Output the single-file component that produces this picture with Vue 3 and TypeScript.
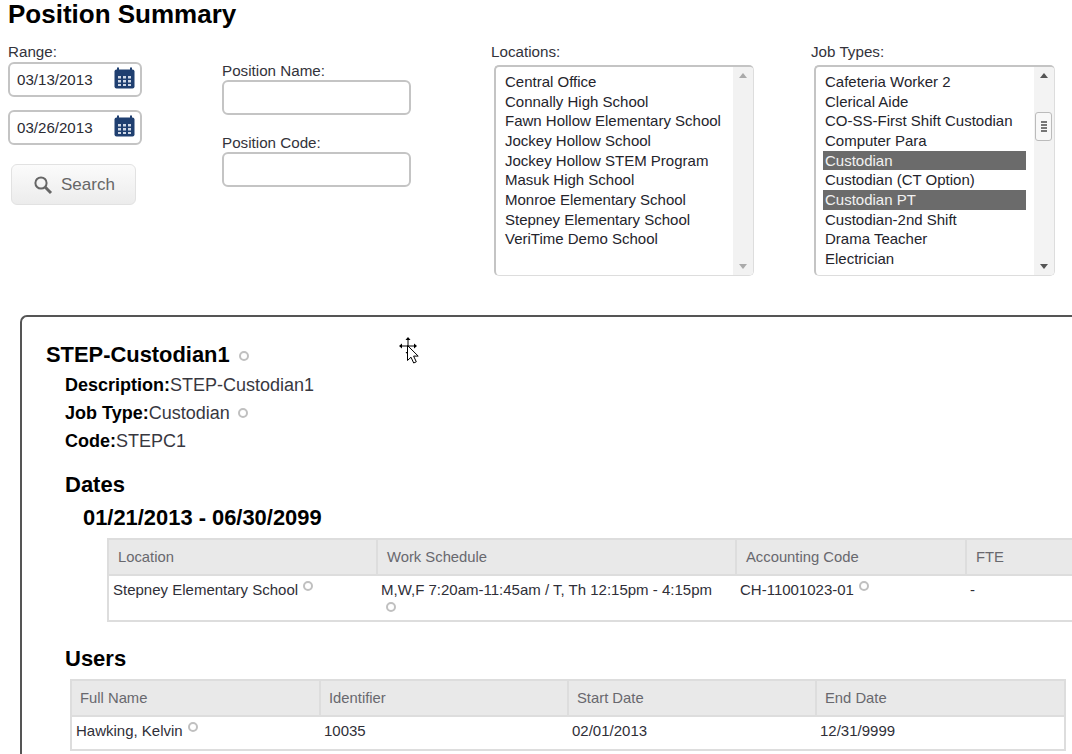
<script setup lang="ts">
const locations: string[] = ['Central Office','Connally High School','Fawn Hollow Elementary School','Jockey Hollow School','Jockey Hollow STEM Program','Masuk High School','Monroe Elementary School','Stepney Elementary School','VeriTime Demo School']
const jobs: { name: string; selected?: boolean }[] = [
  { name: 'Cafeteria Worker 2' },{ name: 'Clerical Aide' },{ name: 'CO-SS-First Shift Custodian' },{ name: 'Computer Para' },
  { name: 'Custodian', selected: true },{ name: 'Custodian (CT Option)' },{ name: 'Custodian PT', selected: true },
  { name: 'Custodian-2nd Shift' },{ name: 'Drama Teacher' },{ name: 'Electrician' }]
const dates: string[] = ['03/13/2013','03/26/2013']
</script>

<template>
  <div class="page">
    <h1 class="title">Position Summary</h1>
    <div class="filters">
      <div class="col-range">
        <label class="lbl">Range:</label>
        <div v-for="d in dates" :key="d" class="date">
          <span>{{ d }}</span>
          <svg class="cal" width="21" height="22" viewBox="0 0 21 22">
            <rect x="0.5" y="2.5" width="20" height="19" rx="2" fill="#1f3f70"/>
            <rect x="3" y="0.5" width="2" height="4" fill="#1f3f70"/><rect x="16" y="0.5" width="2" height="4" fill="#1f3f70"/>
            <g fill="#cfd8e6"><rect x="4" y="9" width="3" height="2.5"/><rect x="9" y="9" width="3" height="2.5"/><rect x="14" y="9" width="3" height="2.5"/><rect x="4" y="13" width="3" height="2.5"/><rect x="9" y="13" width="3" height="2.5"/><rect x="14" y="13" width="3" height="2.5"/><rect x="4" y="17" width="3" height="2"/><rect x="9" y="17" width="3" height="2"/><rect x="14" y="17" width="3" height="2"/></g>
          </svg>
        </div>
        <button class="search" type="button">
          <svg width="20" height="20" viewBox="0 0 20 20" fill="none" stroke="#666"><circle cx="8" cy="8" r="5.6" stroke-width="2"/><path d="M12.3 12.3 18 18" stroke-width="3"/></svg>
          <span>Search</span>
        </button>
      </div>
      <div class="col-pos">
        <label class="lbl">Position Name:</label>
        <div class="text-input"></div>
        <label class="lbl second">Position Code:</label>
        <div class="text-input"></div>
      </div>
      <div class="col-loc">
        <label class="lbl">Locations:</label>
        <div class="listbox">
          <ul><li v-for="l in locations" :key="l">{{ l }}</li></ul>
          <div class="scroll light"><span class="up"></span><span class="down"></span></div>
        </div>
      </div>
      <div class="col-job">
        <label class="lbl">Job Types:</label>
        <div class="listbox">
          <ul><li v-for="j in jobs" :key="j.name" :class="{ sel: j.selected }">{{ j.name }}</li></ul>
          <div class="scroll"><span class="up"></span><span class="thumb"><i></i><i></i><i></i><i></i></span><span class="down"></span></div>
        </div>
      </div>
    </div>

    <section class="panel">
      <h2 class="name">STEP-Custodian1 <span class="dot"></span></h2>
      <div class="facts">
        <p><b>Description:</b>STEP-Custodian1</p>
        <p><b>Job Type:</b>Custodian <span class="dot"></span></p>
        <p><b>Code:</b>STEPC1</p>
      </div>
      <h3 class="dates">Dates</h3>
      <h3 class="range">01/21/2013 - 06/30/2099</h3>
      <table class="grid grid-a">
        <colgroup><col class="a1"><col class="a2"><col class="a3"><col class="a4"></colgroup>
        <thead><tr><th>Location</th><th>Work Schedule</th><th>Accounting Code</th><th>FTE</th></tr></thead>
        <tbody><tr>
          <td>Stepney Elementary School <span class="dot up-dot"></span></td>
          <td>M,W,F 7:20am-11:45am / T, Th 12:15pm - 4:15pm<br><span class="dot under"></span></td>
          <td>CH-11001023-01 <span class="dot up-dot"></span></td>
          <td>-</td>
        </tr></tbody>
      </table>
      <h3 class="users">Users</h3>
      <table class="grid grid-b">
        <colgroup><col class="b1"><col class="b2"><col class="b3"><col class="b4"></colgroup>
        <thead><tr><th>Full Name</th><th>Identifier</th><th>Start Date</th><th>End Date</th></tr></thead>
        <tbody><tr>
          <td>Hawking, Kelvin <span class="dot up-dot"></span></td><td>10035</td><td>02/01/2013</td><td>12/31/9999</td>
        </tr></tbody>
      </table>
    </section>

    <svg class="cursor" width="22" height="28" viewBox="0 0 22 28">
      <g fill="#000"><path d="M10 1 7.5 4h5Z"/><path d="M1 10 4 7.5v5Z"/><path d="M19 10 16 7.5v5Z"/><path d="M10 19 7.5 16h5Z"/></g>
      <path d="M10 4v12M4 10h12" stroke="#000"/>
      <path d="M9.5 9.5v15l3.5-3.3 2.7 5.8 2.6-1.2-2.7-5.7h4.6Z" fill="#fff" stroke="#000"/>
    </svg>
  </div>
</template>

<style>
html, body { margin: 0; overflow: hidden; background: #fff; }
</style>

<style scoped>
.page { position: relative; width: 1072px; height: 754px; overflow: hidden; background: #fff; font-family: "Liberation Sans", Arial, sans-serif; color: #2b2b33; font-size: 15px; }
.title { margin: 0; padding: 0 0 0 8px; font-size: 26px; line-height: 28px; font-weight: bold; color: #000; height: 44px; box-sizing: border-box; }
.filters { display: flex; height: 271px; }
.lbl { display: block; font-size: 15.2px; line-height: 16px; color: #33333b; }
.col-range { width: 222px; padding-left: 8px; box-sizing: border-box; }
.date { width: 134px; height: 35px; box-sizing: border-box; margin: 2px 0 13px; padding: 0 5px 0 7px; display: flex; align-items: center; justify-content: space-between; border: 2px solid #c4c4c4; border-radius: 6px; background: #fff; font-size: 15.1px; }
.cal { margin-top: -4px; }
.search { display: flex; align-items: center; gap: 8px; width: 125px; height: 41px; margin: 19px 0 0 3px; padding: 0 0 0 21px; box-sizing: border-box; border: 1px solid #e2e2e2; border-radius: 6px; background: linear-gradient(#fbfbfb, #ececec); color: #666; font: 17px "Liberation Sans", Arial, sans-serif; }
.col-pos { width: 269px; padding-top: 19px; box-sizing: border-box; }
.text-input { width: 189px; height: 35px; box-sizing: border-box; margin-top: 1px; border: 2px solid #c4c4c4; border-radius: 6px; background: #fff; }
.second { margin-top: 20px; }
.col-loc { width: 320px; }
.col-job { width: 261px; }
.listbox { position: relative; display: flex; height: 211px; box-sizing: border-box; margin: 5px 0 0 3px; border: 2px solid #c4c4c4; border-right-width: 1px; border-bottom-width: 1px; border-color: #c4c4c4 #ddd #ddd #c4c4c4; border-radius: 5px; overflow: hidden; background: #fff; }
.col-loc .listbox { width: 260px; }
.col-job .listbox { width: 241px; }
ul { flex: 1; margin: 0; padding: 5px 8px 0 7px; list-style: none; }
li { height: 19.67px; line-height: 19.67px; padding-left: 2px; font-size: 15px; white-space: nowrap; color: #24242c; }
li.sel { background: #6b6b6b; color: #f2f2f2; }
.scroll { position: relative; width: 20px; background: #f3f3f3; }
.scroll.light { background: #f2f2f2; }
.up, .down { position: absolute; left: 6px; width: 0; height: 0; border-left: 4px solid transparent; border-right: 4px solid transparent; }
.up { top: 6px; border-bottom: 5px solid #555; }
.down { bottom: 6px; border-top: 5px solid #555; }
.light .up { border-bottom-color: #aaa; }
.light .down { border-top-color: #aaa; }
.thumb { position: absolute; left: 1px; top: 45px; width: 17px; height: 29px; box-sizing: border-box; border: 1px solid #bbb; border-radius: 3px; background: #f8f8f8; display: flex; flex-direction: column; align-items: center; justify-content: center; gap: 1px; }
.thumb i { display: block; width: 6px; height: 2px; background: #777; }
.panel { position: relative; width: 1200px; height: 480px; box-sizing: border-box; margin-left: 20px; border: 2px solid #555; border-bottom: 0; border-right: 0; border-radius: 7px 0 0 0; padding-top: 25px; color: #333; }
.name { margin: 0 0 0 24px; font-size: 21.9px; line-height: 26px; font-weight: bold; color: #000; }
.dot { display: inline-block; width: 10px; height: 10px; box-sizing: border-box; border: 2px solid #c0c0c0; border-radius: 50%; vertical-align: 1px; margin-left: 3px; }
.up-dot { vertical-align: 4px; margin-left: 1px; }
.under { margin: 4px 0 0 5px; display: block; }
.facts { margin: 3px 0 0 43px; }
.facts p { margin: 0; height: 28px; line-height: 28px; font-size: 18px; color: #38383f; }
.facts b { color: #000; }
.dates, .users { margin: 0 0 0 43px; font-size: 22px; line-height: 26px; color: #000; }
.dates { margin-top: 17px; }
.range { margin: 8px 0 0 61px; font-size: 21.9px; line-height: 24px; color: #000; }
.grid { border-collapse: collapse; table-layout: fixed; border: 2px solid #ddd; font-size: 15px; }
.grid-a { margin: 8px 0 0 85px; width: 998px; }
.grid-b { margin: 7px 0 0 48px; width: 994px; }
.a1 { width: 269px; } .a2 { width: 359px; } .a3 { width: 230px; } .a4 { width: 140px; }
.b1 { width: 249px; } .b2 { width: 248px; } .b3 { width: 248px; } .b4 { width: 249px; }
.grid th { height: 36px; padding: 0 9px; box-sizing: border-box; background: #e9e9e9; border: 2px solid #ddd; border-width: 0 2px 2px 0; font-weight: normal; font-size: 14.8px; text-align: left; color: #68686e; }
.grid-b th { padding: 0 8px; }
.grid td { padding: 5px 4px 0 4px; vertical-align: top; color: #2f2f38; }
.grid-a td { height: 46px; box-sizing: border-box; }
.grid-b td { height: 34px; box-sizing: border-box; padding-top: 5px; }
.users { margin-top: 24px; }
.cursor { position: absolute; left: 398px; top: 336px; }
</style>
